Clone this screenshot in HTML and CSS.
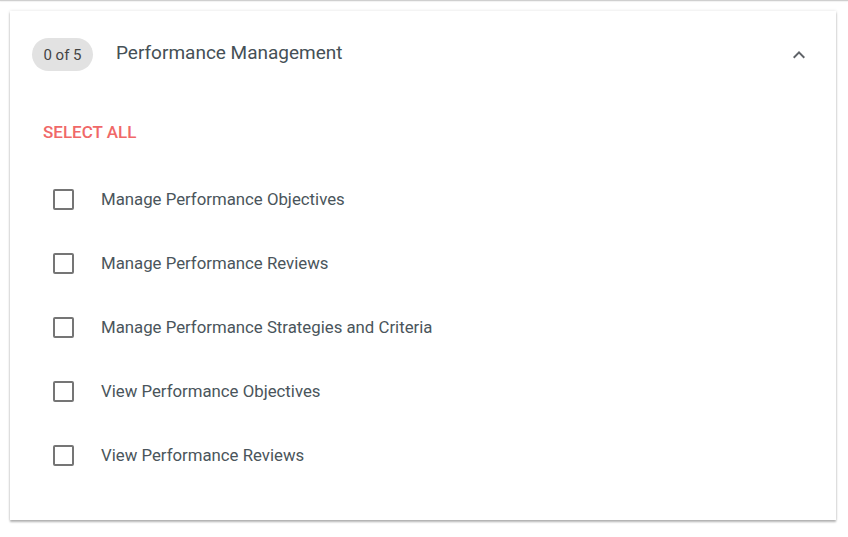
FILE: index.html
```html
<!DOCTYPE html>
<html>
<head>
<meta charset="utf-8">
<link rel="stylesheet" href="styles.css">
</head>
<body>
<div class="topline"></div>
<div class="card">
  <div class="header">
    <span class="badge">0 of 5</span>
    <span class="title">Performance Management</span>
    <span class="chevron">
      <svg width="24" height="24" viewBox="0 0 24 24"><path d="M7.41 15.41 12 10.83l4.59 4.58L18 14l-6-6-6 6z" fill="#5f6368"/></svg>
    </span>
  </div>
  <div class="select-all">SELECT ALL</div>
  <ul class="list">
    <li class="row"><span class="box"></span><span class="label">Manage Performance Objectives</span></li>
    <li class="row"><span class="box"></span><span class="label">Manage Performance Reviews</span></li>
    <li class="row"><span class="box"></span><span class="label">Manage Performance Strategies and Criteria</span></li>
    <li class="row"><span class="box"></span><span class="label">View Performance Objectives</span></li>
    <li class="row"><span class="box"></span><span class="label">View Performance Reviews</span></li>
  </ul>
</div>
</body>
</html>
```
FILE: styles.css
```css
html, body {
  margin: 0;
  padding: 0;
  background: #ffffff;
  font-family: Roboto, "Liberation Sans", sans-serif;
}
body {
  padding-bottom: 17px;
}
.topline {
  height: 1px;
  background: #cfcfcf;
  box-shadow: 0 1px 1px rgba(0,0,0,0.06);
}
.card {
  margin: 10px 12px 0 10px;
  background: #fff;
  box-shadow: 0 2px 2px 0 rgba(0,0,0,0.28), 0 0 3px 0 rgba(0,0,0,0.12);
  padding-bottom: 33px;
}
.header {
  display: flex;
  align-items: center;
  padding: 27px 25px 0 22px;
  height: 33px;
}
.badge {
  display: inline-flex;
  align-items: center;
  justify-content: center;
  width: 61px;
  height: 33px;
  border-radius: 17px;
  background: #e2e2e2;
  color: #444;
  font-size: 15px;
}
.title {
  margin-left: 23px;
  font-size: 19px;
  color: #455056;
  flex: 1;
  position: relative;
  top: -2px;
}
.chevron {
  width: 24px;
  height: 24px;
  display: flex;
}
.select-all {
  margin: 43px 0 0 33px;
  height: 36px;
  line-height: 36px;
  font-size: 17px;
  font-weight: 500;
  color: #f06868;
}
.list {
  list-style: none;
  margin: 17px 0 0 0;
  padding: 0;
}
.row {
  height: 64px;
  display: flex;
  align-items: center;
  padding-left: 43px;
}
.box {
  width: 17px;
  height: 17px;
  border: 2px solid #757575;
  border-radius: 2px;
  flex: none;
}
.label {
  margin-left: 27px;
  font-size: 16.8px;
  color: #4a555b;
}
```
